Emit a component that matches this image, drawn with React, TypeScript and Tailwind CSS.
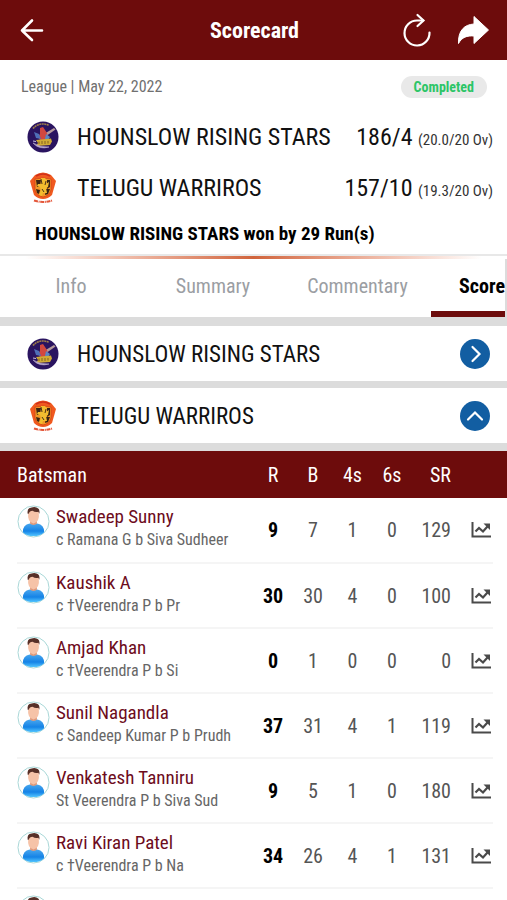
import React from 'react';

type Batsman = {
  name: string;
  dismissal: string;
  runs: number;
  balls: number;
  fours: number;
  sixes: number;
  strikeRate: number;
};

const batsmen: Batsman[] = [
  { name: 'Swadeep Sunny', dismissal: 'c Ramana G b Siva Sudheer', runs: 9, balls: 7, fours: 1, sixes: 0, strikeRate: 129 },
  { name: 'Kaushik A', dismissal: 'c †Veerendra P b Pr', runs: 30, balls: 30, fours: 4, sixes: 0, strikeRate: 100 },
  { name: 'Amjad Khan', dismissal: 'c †Veerendra P b Si', runs: 0, balls: 1, fours: 0, sixes: 0, strikeRate: 0 },
  { name: 'Sunil Nagandla', dismissal: 'c Sandeep Kumar P b Prudh', runs: 37, balls: 31, fours: 4, sixes: 1, strikeRate: 119 },
  { name: 'Venkatesh Tanniru', dismissal: 'St Veerendra P b Siva Sud', runs: 9, balls: 5, fours: 1, sixes: 0, strikeRate: 180 },
  { name: 'Ravi Kiran Patel', dismissal: 'c †Veerendra P b Na', runs: 34, balls: 26, fours: 4, sixes: 1, strikeRate: 131 },
];

const StarsLogo = () => (
  <svg viewBox="0 0 32 32" className="h-8 w-8 shrink-0" aria-hidden="true">
    <circle cx="16" cy="16" r="15.5" fill="#2a1460" />
    <path d="M6 7.500A13 13 0 0 1 22 4.500" fill="none" stroke="#a07f4a" strokeWidth="1.600" strokeDasharray="2 .5" />
    <path d="M17 13l10-6 1.500 1.500-10 7z" fill="#b59a9c" />
    <path d="M13 7l3-1 2 3 2 3 1 4-2 3h-6l-2-3 2-3z" fill="#d2483f" />
    <path d="M7 11l5 2 2 5-5-1z" fill="#4f6fb8" />
    <path d="M19 13l4 3-2 3-3-1z" fill="#5a86c4" />
    <path d="M9 19l15-1.500 1 3-2 3.500-14 1 2-3z" fill="#d0ab35" />
    <path d="M12 20.500v2.500m3-3v3m3-3v3m3-3v2.500" stroke="#7a5a20" strokeWidth=".9" />
    <path d="M6 22q6 7 16 4q-9 .5-16-4z" fill="#b9a9cf" stroke="#b9a9cf" strokeWidth=".6" />
    <path d="M6 20l3 .5" stroke="#c9bfe0" strokeWidth="1" />
  </svg>
);

const WarriorsLogo = () => (
  <svg viewBox="0 0 32 32" className="h-8 w-8 shrink-0" aria-hidden="true">
    <path d="M8 3q8-5 16 0l5 6-4 14q-4 4-9 4t-9-4L3 9z" fill="#f0591f" />
    <path d="M9 4q7-4 14 0" fill="none" stroke="#cf2f1a" strokeWidth="1.600" />
    <path d="M8 7q8-2 16 0v11q-2 6-8 7-6-1-8-7z" fill="#f29a28" stroke="#cf4417" strokeWidth=".8" />
    <path d="M9 8h5l-1 6-3 1zM20 8h3v7l-3 2zM9 17l4 1-1 4-2-1zM19 17l4 0-2 5-3 1z" fill="#3a2413" />
    <path d="M14 6l4 0 2 3-1 3 3-2-1 5-2 1 1 5-4 0-1 3-3-1 2-5-1-3-3-1 1-2 3 0z" fill="#f2bd2f" />
    <path d="M14 7l1 5m4-3l-1 4m-3 4l2 3" stroke="#3a2413" strokeWidth=".9" fill="none" />
    <path d="M7 28.500q9 3 18 0" fill="none" stroke="#e4573a" strokeWidth="2" strokeDasharray="4 .7 1 .6" />
  </svg>
);

const Avatar = () => (
  <svg viewBox="0 0 34 34" className="h-[33px] w-[33px] shrink-0" aria-hidden="true">
    <defs>
      <linearGradient id="shirt" x1="0" y1="0" x2="0" y2="1">
        <stop offset="0" stopColor="#4aa7ee" />
        <stop offset=".6" stopColor="#1583e6" />
        <stop offset="1" stopColor="#52c5ff" />
      </linearGradient>
    </defs>
    <circle cx="17" cy="17" r="16" fill="#fff" stroke="#a5d6d6" />
    <path d="M13.500 14h7v6l-3.500 3-3.500-3z" fill="#e09a7c" />
    <path d="M6 28q0-8 7-9 4 3 8 0 7 1 7 9-4 4-11 4T6 28z" fill="url(#shirt)" />
    <path d="M11.500 8q0-4 5.500-4t5.500 4q1 10-5.500 11-6.500-1-5.500-11z" fill="#f6c3a8" />
    <path d="M11 9q-1-6 4-6.500 3-1 5 0 4 1 3 6.500l-1-2q-3 1-6-1-3 0-4 3z" fill="#573028" />
  </svg>
);

const TrendIcon = () => (
  <svg viewBox="0 0 20 16" className="h-4 w-5" fill="none" stroke="#4a4a4a" aria-hidden="true">
    <path d="M1.500 0v14.500H20" strokeWidth="2" />
    <path d="M4.500 9.500l3.500-3.500 4 3.500 4.500-5" strokeWidth="2.200" />
    <path d="M12.500 1.500H19V8z" fill="#4a4a4a" stroke="none" />
  </svg>
);

const ScoreLine = ({ logo, team, score, overs }: { logo: React.ReactNode; team: string; score: string; overs: string }) => (
  <div className="flex items-center">
    {logo}
    <span className="ml-[18px] flex-1 text-2xl">{team}</span>
    <span className="text-2xl">
      {score} <span className="text-[15px] text-[#333]">({overs} Ov)</span>
    </span>
  </div>
);

const TeamPanel = ({ logo, team, open }: { logo: React.ReactNode; team: string; open: boolean }) => (
  <div className="flex h-[55px] items-center bg-white pl-[27px] pr-[17px]">
    {logo}
    <h2 className="ml-[18px] flex-1 pt-[2px] text-[23px] leading-8 text-[#111]">{team}</h2>
    <button
      type="button"
      aria-expanded={open}
      aria-label={team}
      className="flex h-[30px] w-[30px] items-center justify-center rounded-full bg-[#125ea2]"
    >
      <svg viewBox="0 0 30 30" className="h-[30px] w-[30px]" fill="none" stroke="#fff" strokeWidth="2.2" strokeLinecap="round">
        {open ? <path d="M8 18.500l7-7 7 7" /> : <path d="M12.500 8l7 7-7 7" />}
      </svg>
    </button>
  </div>
);

const App: React.FC = () => {
  return (
    <div className="flex h-screen flex-col overflow-hidden bg-white font-['Roboto_Condensed','Liberation_Sans_Narrow',Roboto,sans-serif] text-[#111]">
      <header className="flex h-[60px] shrink-0 items-center justify-between bg-[#6d0c0c] pl-5 pr-[18px] text-white">
        <div className="flex-1">
          <button type="button" aria-label="Back" className="block">
            <svg viewBox="0 0 24 24" className="h-6 w-6" fill="none" stroke="#fff" strokeWidth="2.600" strokeLinecap="round" strokeLinejoin="round">
              <path d="M12 2.500L2 12.500l10 9.500M2 12.500h20" />
            </svg>
          </button>
        </div>
        <h1 className="text-[22px] font-bold">Scorecard</h1>
        <div className="flex flex-1 items-center justify-end gap-[26px]">
          <button type="button" aria-label="Refresh">
            <svg viewBox="0 0 28 34" className="h-[34px] w-7" fill="none" stroke="#fff" strokeWidth="2.200" strokeLinecap="round">
              <path d="M26.500 19.500A12.500 12.500 0 1 1 14 7.500h6" />
              <path d="M14.500 2L20.500 7.500l-6 5.500" />
            </svg>
          </button>
          <button type="button" aria-label="Share">
            <svg viewBox="0 0 32 30" className="h-[30px] w-8" fill="#fff" stroke="#fff" strokeLinejoin="round">
              <path d="M17 1.500L31.500 15 17 28.500V21C10 20.500 5 22 1.500 28.500 1 16 7 9.500 17 9z" />
            </svg>
          </button>
        </div>
      </header>

      <section className="shrink-0 border-b-2 border-[#e8e8e8] pb-2 pt-[15px]">
        <div className="flex items-center justify-between pl-[21px] pr-5">
          <p className="text-base leading-6 text-[#707070]">League | May 22, 2022</p>
          <span className="rounded-full bg-[#e9e9e9] px-[13px] text-sm font-bold leading-[22px] text-[#2cc567]">Completed</span>
        </div>
        <div className="mt-[22px] flex flex-col gap-[19px] pl-[27px] pr-[14px]">
          <ScoreLine logo={<StarsLogo />} team="HOUNSLOW RISING STARS" score="186/4" overs="20.0/20" />
          <ScoreLine logo={<WarriorsLogo />} team="TELUGU WARRIROS" score="157/10" overs="19.3/20" />
        </div>
        <p className="mt-[18px] pl-[35px] text-[19px] font-bold leading-6 text-black">HOUNSLOW RISING STARS won by 29 Run(s)</p>
      </section>
      <div className="h-[3px] shrink-0 bg-linear-to-r from-white from-5% via-[#d0643c] to-white to-95%" />

      <nav className="flex h-[58px] shrink-0 border-r-2 border-[#dcdcdc] text-center text-xl leading-[54px] text-[#9b9ea3]">
        <a href="#info" className="w-[142px] shrink-0">Info</a>
        <a href="#summary" className="w-[142px] shrink-0">Summary</a>
        <a href="#commentary" className="w-[147px] shrink-0">Commentary</a>
        <a href="#scorecard" aria-current="page" className="flex-1 border-b-[6px] border-[#6d0c0c] text-right font-bold text-black">
          Score
        </a>
      </nav>

      <div className="flex shrink-0 flex-col gap-[7px] bg-[#dcdcdc] pb-2 pt-[9px]">
        <TeamPanel logo={<StarsLogo />} team="HOUNSLOW RISING STARS" open={false} />
        <TeamPanel logo={<WarriorsLogo />} team="TELUGU WARRIROS" open />
      </div>

      <main className="pl-[17px] pr-[14px]">
        <table className="w-full table-fixed text-center text-xl">
          <thead>
            <tr className="h-[47px] bg-[#6d0c0c] text-white shadow-[-17px_0_0_#6d0c0c,17px_0_0_#6d0c0c]">
              <th className="text-left font-normal">Batsman</th>
              <th className="w-10 font-normal">R</th>
              <th className="w-10 font-normal">B</th>
              <th className="w-[39px] font-normal">4s</th>
              <th className="w-10 font-normal">6s</th>
              <th className="w-[39px] text-right font-normal">SR</th>
              <th className="w-[42px]" aria-label="Chart" />
            </tr>
          </thead>
          <tbody className="text-[#555]">
            {batsmen.map((b) => (
              <tr key={b.name} className="h-[65px] border-b-2 border-[#f5f5f5]">
                <td className="pt-[7px] text-left align-top">
                  <div className="flex gap-[6px]">
                    <Avatar />
                    <div className="whitespace-nowrap">
                      <a href="#player" className="block text-[19px] leading-6 text-[#6d0c1c]">{b.name}</a>
                      <p className="text-base leading-[22px] text-[#666]">{b.dismissal}</p>
                    </div>
                  </div>
                </td>
                <td className="font-bold text-black">{b.runs}</td>
                <td>{b.balls}</td>
                <td>{b.fours}</td>
                <td>{b.sixes}</td>
                <td className="text-right">{b.strikeRate}</td>
                <td>
                  <button type="button" aria-label={`Chart for ${b.name}`} className="ml-auto mr-[2px] block">
                    <TrendIcon />
                  </button>
                </td>
              </tr>
            ))}
            <tr>
              <td className="pt-[6px]">
                <Avatar />
              </td>
            </tr>
          </tbody>
        </table>
      </main>
    </div>
  );
};

export default App;
